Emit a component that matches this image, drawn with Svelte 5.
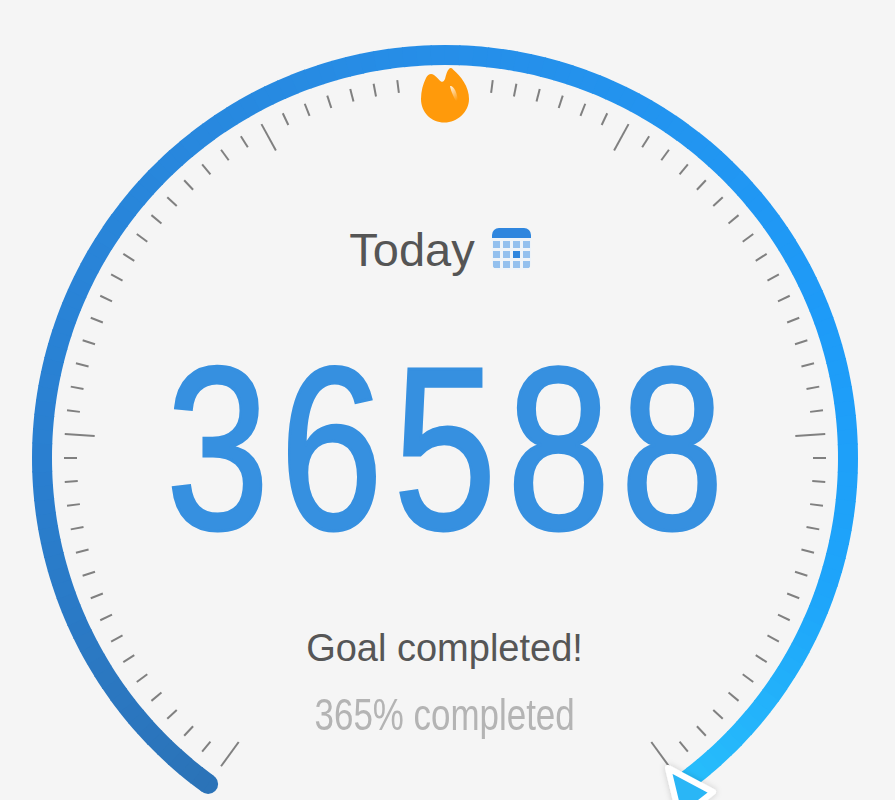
<script lang="ts">
  const cx = 445;
  const cy = 458;
  const ringR = 403;

  function polar(deg: number, r: number) {
    const a = (deg * Math.PI) / 180;
    return { x: cx + r * Math.sin(a), y: cy - r * Math.cos(a) };
  }

  // 81 ticks over 288deg, every 16th is long. the ones behind the flame are left out
  const ticks: { a: any; b: any }[] = [];
  for (let i = -40; i <= 40; i++) {
    if (Math.abs(i) < 2) continue;
    const deg = i * 3.6;
    const major = (i + 40) % 16 === 0;
    ticks.push({ a: polar(deg, 381), b: polar(deg, major ? 351 : 368) });
  }

  const stops = [
    [-144, [43, 115, 184]],
    [-90, [42, 127, 208]],
    [0, [38, 142, 232]],
    [70, [30, 155, 248]],
    [110, [30, 165, 250]],
    [144, [39, 190, 251]],
  ] as [number, number[]][];

  function colorAt(deg: number) {
    for (let i = 0; i < stops.length - 1; i++) {
      const [d0, c0] = stops[i];
      const [d1, c1] = stops[i + 1];
      if (deg <= d1) {
        const t = (deg - d0) / (d1 - d0);
        return `rgb(${c0.map((v, k) => Math.round(v + (c1[k] - v) * t)).join(",")})`;
      }
    }
    return "rgb(39,190,251)";
  }

  // ring is cut in short pieces so the colour can run along the curve
  const segments: { d: string; color: string }[] = [];
  for (let deg = -144; deg < 144; deg += 2) {
    const p = polar(deg, ringR);
    const q = polar(deg + 2.15, ringR);
    segments.push({
      d: `M${p.x} ${p.y}A${ringR} ${ringR} 0 0 1 ${q.x} ${q.y}`,
      color: colorAt(deg + 1),
    });
  }
  const capStart = polar(-144, ringR);

  const cols = [0, 10, 20, 30];
  const rows = [13, 23, 33];
</script>

<div class="gauge">
  <svg class="dial" width="895" height="800" viewBox="0 0 895 800">
    <defs>
      <filter id="arrow-shadow" x="-30%" y="-30%" width="160%" height="160%">
        <feDropShadow dx="0" dy="0" stdDeviation="3" flood-color="#000" flood-opacity="0.18" />
      </filter>
      <linearGradient id="shine" x1="0" y1="0" x2="0.4" y2="1">
        <stop offset="0" stop-color="#fff" stop-opacity="0.9" />
        <stop offset="1" stop-color="#fff" stop-opacity="0" />
      </linearGradient>
    </defs>

    {#each ticks as t}
      <line class="tick" x1={t.a.x} y1={t.a.y} x2={t.b.x} y2={t.b.y} />
    {/each}

    <circle cx={capStart.x} cy={capStart.y} r="10" fill={segments[0].color} />
    {#each segments as s}
      <path class="ring" d={s.d} stroke={s.color} />
    {/each}

    <path
      d="M668 768 L713 792 L680 818 Z"
      fill="#2cb6f6"
      stroke="#fff"
      stroke-width="6"
      stroke-linejoin="round"
      filter="url(#arrow-shadow)"
    />

    <path
      d="M426 78 C428 74 431 73 434 75 C437 77 439 80 441 81.5 C443 82.5 444 81 445 79 C446 75 447 71 449 69 C450 67.5 452 68 453 69.5 C461 76 469 87 469 99 C469 112 457 122.5 444.5 122.5 C431 122.5 421 112 421 99 C421 91 423 84 426 78 Z"
      fill="#ff9a0b"
    />
    <path d="M450 86 C453 85 458 92 458 104 C455 100 451 92 450 86 Z" fill="url(#shine)" />
  </svg>

  <div class="readout">
    <div class="title">
      <span>Today</span>
      <svg class="cal" width="39" height="42" viewBox="0 0 39 42">
        <rect width="39" height="42" rx="7" fill="#eef3f8" />
        <path d="M0 10V7a7 7 0 0 1 7-7h25a7 7 0 0 1 7 7v3Z" fill="#2f86de" />
        <clipPath id="cal-clip"><rect width="39" height="42" rx="7" /></clipPath>
        <g clip-path="url(#cal-clip)">
          {#each rows as y, r}
            {#each cols as x, c}
              <rect
                x={x + 1}
                {y}
                width="7"
                height="7"
                fill={r === 1 && c === 2 ? "#2f86de" : "#93c0ee"}
              />
            {/each}
          {/each}
        </g>
      </svg>
    </div>
    <div class="count">36588</div>
    <div class="goal">Goal completed!</div>
    <div class="percent">365% completed</div>
  </div>
</div>

<style>
  :global(body) {
    background: #f5f5f5;
  }

  .gauge {
    position: relative;
    width: 895px;
    height: 800px;
    overflow: hidden;
    background: #f5f5f5;
  }

  .dial {
    position: absolute;
    left: 0;
    top: 0;
  }

  .tick {
    stroke: #808080;
    stroke-width: 2;
  }

  .ring {
    fill: none;
    stroke-width: 20;
  }

  .readout {
    position: relative;
    display: flex;
    flex-direction: column;
    align-items: center;
    padding-top: 222px;
    font-family: "Liberation Sans", Arial, sans-serif;
  }

  .title {
    display: flex;
    align-items: center;
    gap: 17px;
    height: 54px;
    margin-left: -15px;
    font-size: 47px;
    color: #555;
  }

  /* the reference digits are a condensed cut, no narrow face is installed */
  .count {
    margin-top: 38px;
    height: 270px;
    margin-left: 6px;
    font-size: 232px;
    line-height: 270px;
    letter-spacing: 13px;
    color: #3690e0;
    transform: scaleX(0.8);
    -webkit-text-stroke: 3px #3690e0;
  }

  .goal {
    margin-top: 42px;
    margin-left: -6px;
    font-size: 38px;
    line-height: 44px;
    color: #565656;
  }

  .percent {
    margin-top: 22px;
    margin-left: -6px;
    font-size: 45px;
    line-height: 46px;
    color: #b4b4b4;
    transform: scaleX(0.776);
  }
</style>
